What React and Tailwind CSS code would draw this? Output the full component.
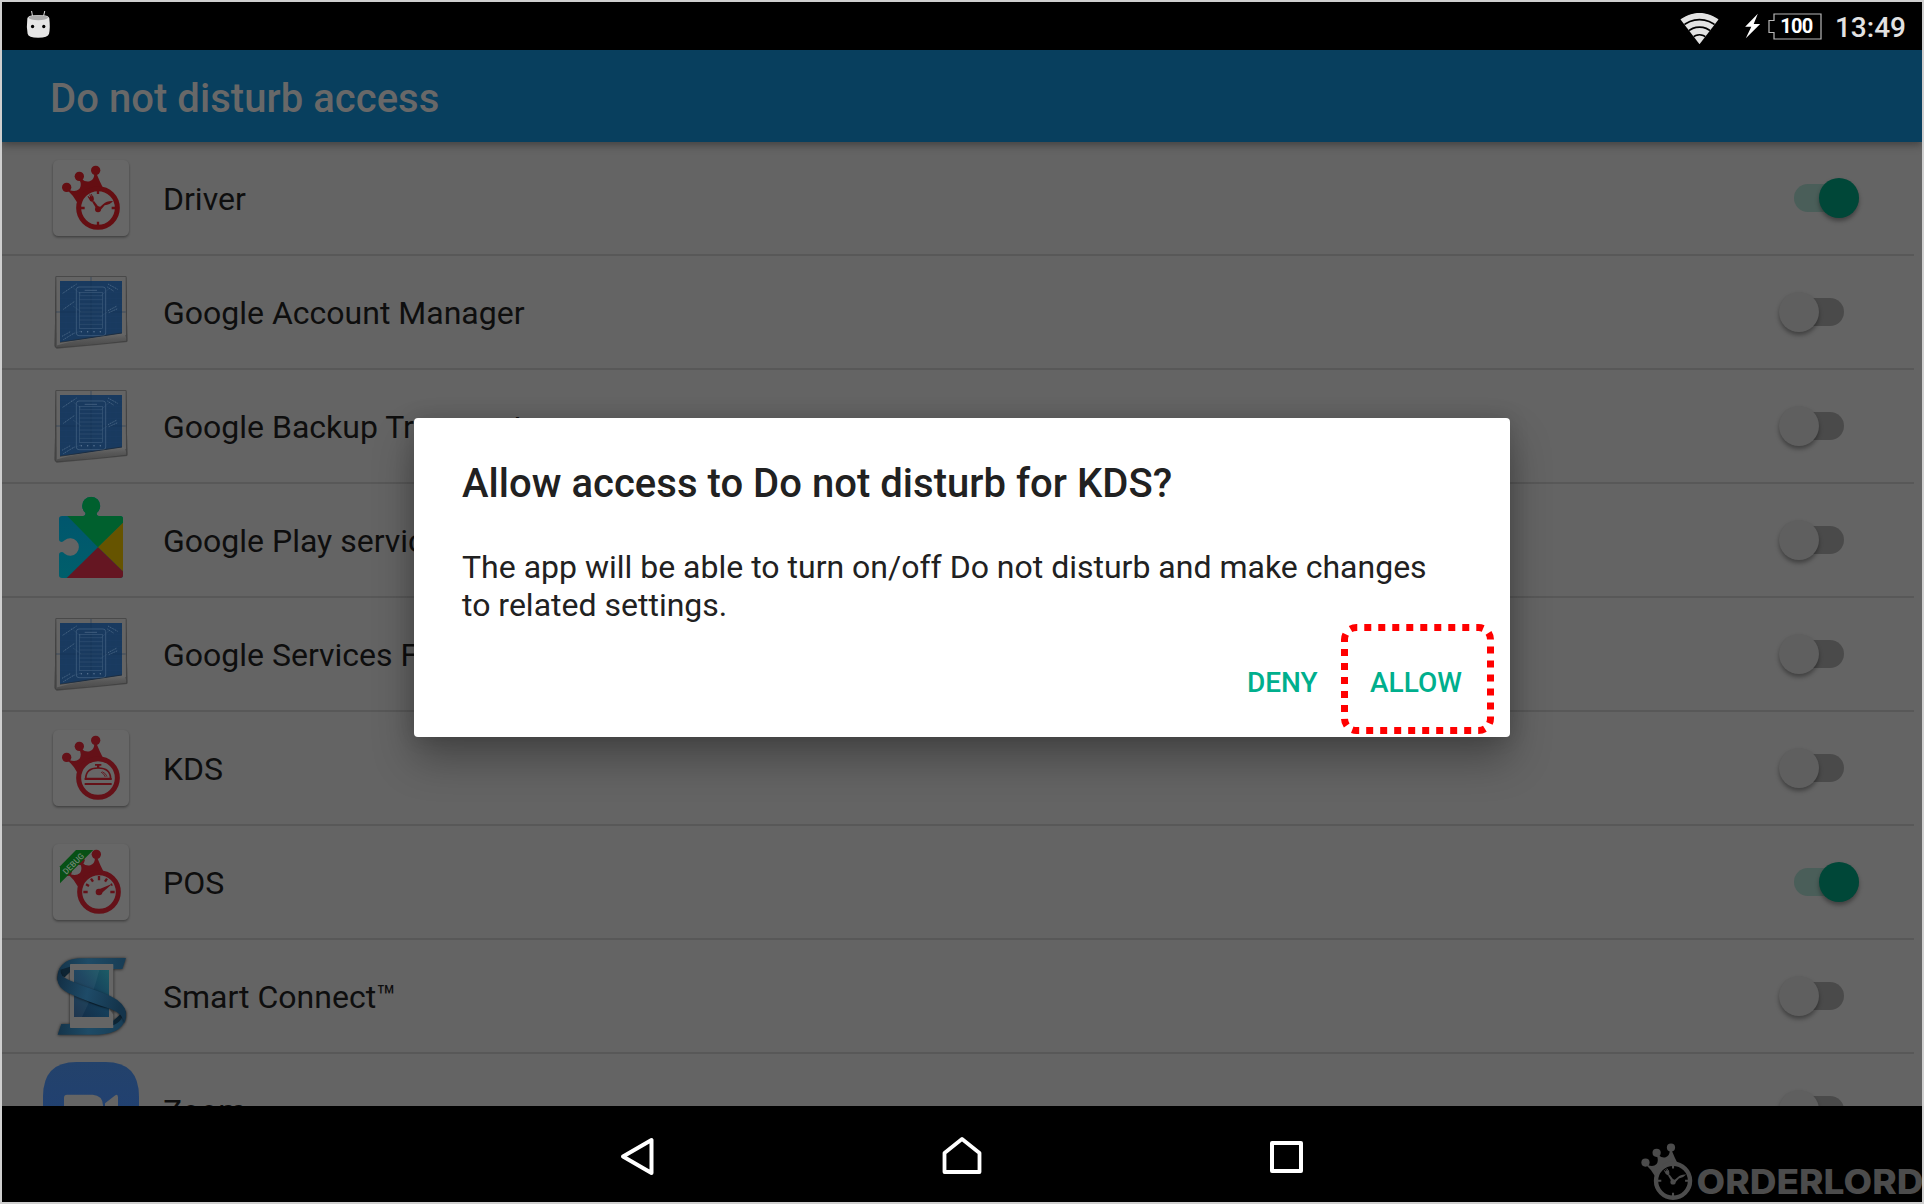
import React from "react";

function IconFrame({ viewBox = "39 30 228 228", children }) {
  return (
    <svg viewBox={viewBox} className="h-[76px] w-[76px] shrink-0 overflow-visible">
      {children}
    </svg>
  );
}

function Tile() {
  return (
    <rect x="39" y="30" width="228" height="228" rx="16" fill="#676767"
      style={{ filter: "drop-shadow(0 4px 3px rgba(0,0,0,.38))" }} />
  );
}

function Crown() {
  return (
    <g>
      <circle cx="80" cy="112" r="14" />
      <circle cx="118" cy="79" r="14" />
      <circle cx="167" cy="61" r="14" />
      <path d="M88 120 Q106 128 118 117 Q126 106 119 90 L126 88 Q136 97 149 94 Q162 90 163 72 L170 72 Q178 92 188 112 L150 116 L122 138 L112 158 Q102 138 84 122 Z" />
    </g>
  );
}

function ClockMark() {
  return (
    <>
      <Crown />
      <circle cx="174" cy="174" r="58" fill="none" stroke="currentColor" strokeWidth="15" />
      <path d="M174 120v12M174 215v12M122 174h12M215 174h12" stroke="currentColor" strokeWidth="7" />
      <circle cx="174" cy="178" r="9" />
      <path d="M170 178 L157 156 L162 153 L178 174 Z" />
      <path d="M147 144 L144 138 M152 141 L149 134 M157 139 L153 132" fill="none" stroke="currentColor" strokeWidth="3" />
      <path d="M145 143 Q149 154 157 156 Q165 151 159 137 L156 138 Z" />
      <path d="M174 176 L190 162 Q200 152 219 153 Q210 164 194 166 L180 182 Z" />
    </>
  );
}

function DriverIcon() {
  return (
    <IconFrame>
      <Tile />
      <g fill="currentColor" className="text-[#650e12]"><ClockMark /></g>
    </IconFrame>
  );
}

function KdsIcon() {
  return (
    <IconFrame>
      <Tile />
      <g fill="currentColor" className="text-[#651118]">
        <Crown />
        <circle cx="174" cy="174" r="58" fill="none" stroke="currentColor" strokeWidth="15" />
        <path d="M165 132h19v5h-6v7h-7v-7h-6z" />
        <path d="M137 176 Q138 144 174 144 Q211 144 212 176 Z" fill="none" stroke="currentColor" strokeWidth="5" />
        <path d="M187 155 Q198 160 201 170 M183 156 Q193 162 196 171" fill="none" stroke="currentColor" strokeWidth="2.5" />
        <path d="M134 174h81v6h-81zM134 189h81v6h-81z" />
      </g>
    </IconFrame>
  );
}

function PosIcon() {
  return (
    <IconFrame>
      <Tile />
      <g fill="currentColor" className="text-[#651118]" transform="translate(2 0)">
        <Crown />
        <circle cx="175" cy="174" r="58" fill="none" stroke="currentColor" strokeWidth="15" />
        <path d="M128 174h13M209 174h13M136 151l9 5M151 134l6 9M175 126v13M199 134l-6 9M215 151l-4 2" stroke="currentColor" strokeWidth="7" />
        <circle cx="175" cy="174" r="10" />
        <path d="M170 168 L215 149 L180 180 Z" />
      </g>
      <path d="M108 48 H160 L60 148 V97 Z" fill="#075015" />
      <text x="0" y="0" transform="translate(79 123) rotate(-45)" fill="#6d8471" fontSize="25" textLength="78" lengthAdjust="spacingAndGlyphs" className="font-['Roboto'] font-medium">DEBUG</text>
    </IconFrame>
  );
}

function BlueprintIcon() {
  return (
    <IconFrame viewBox="39 372 228 228">
      <defs>
        <linearGradient id="curl" x1="0" y1="0" x2="0.12" y2="1">
          <stop offset="0" stopColor="#6e6e6e" />
          <stop offset="0.5" stopColor="#585858" />
          <stop offset="1" stopColor="#4a4a4a" />
        </linearGradient>
      </defs>
      <path d="M47 379 L259 379 L262 573 Q160 584 50 593 L44 588 Z" fill="#444" style={{ filter: "drop-shadow(0 2px 2px rgba(0,0,0,.45))" }} />
      <path d="M49 381 H257 L258 556 L50 588 Z" fill="#646464" />
      <path d="M60 393 H246 V551 Q160 564 60 577 Z" fill="#193a5f" />
      <path d="M60 410H246M60 428H246M60 446H246M60 464H246M60 500H246M60 518H246M60 536H246M78 393V574M96 393V572M114 393V570M132 393V568M174 393V562M192 393V560M210 393V558M228 393V555" stroke="#1d4066" strokeWidth="1" />
      <path d="M48 486H257M153 381V564" stroke="#163350" strokeWidth="1.5" />
      <g fill="none" stroke="#456382" strokeWidth="1.6">
        <rect x="109" y="411" width="88" height="146" rx="8" strokeWidth="2.2" />
        <rect x="118" y="428" width="70" height="108" />
        <path d="M134 421h37" strokeWidth="2.6" />
        <path d="M118 437h70M118 449h70M118 462h70M118 474h70M118 486h70M118 498h70M118 510h70M118 523h70" strokeWidth="1.2" />
        <path d="M94 409L124 434M207 416L182 438M99 468L123 485M205 484L180 501M98 552L123 543" strokeDasharray="3 2" strokeWidth="1.3" />
        <path d="M68 430L110 402M204 402L233 418M202 411L222 424M70 478L104 454M204 482L231 468M206 488L233 476M66 559L91 545M70 569L103 549" strokeDasharray="4 2" strokeWidth="3" />
      </g>
      <g fill="#5d7896">
        <circle cx="124" cy="545" r="2.2" /><circle cx="143" cy="545" r="2.2" /><circle cx="162" cy="545" r="2.2" /><circle cx="181" cy="545" r="2.2" />
      </g>
      <path d="M48 587 Q100 571 251 550 Q260 558 258 572 Q160 584 48 592 Z" fill="url(#curl)" />
      <path d="M60 577 Q130 566 246 549" stroke="#222" strokeWidth="2.5" opacity=".6" fill="none" />
    </IconFrame>
  );
}

function PlayServicesIcon() {
  return (
    <IconFrame viewBox="39 66 228 228">
      <defs>
        <clipPath id="puzzle">
          <path d="M66 108 H130 Q138 107 136 98 A27 27 0 1 1 171 98 Q168 107 176 108 H241 Q249 108 249 116 V286 Q249 294 241 294 H66 Q57 294 57 286 V224 Q57 216 66 216 Q70 217 74 221 A26 26 0 1 0 74 181 Q70 185 66 186 Q57 186 57 178 V116 Q57 108 66 108 Z" />
        </clipPath>
        <linearGradient id="teal" x1="0" y1="0" x2="0" y2="1">
          <stop offset="0" stopColor="#00536e" /><stop offset="1" stopColor="#005f6b" />
        </linearGradient>
      </defs>
      <g clipPath="url(#puzzle)">
        <rect x="50" y="40" width="205" height="260" fill="url(#teal)" />
        <path d="M82 108 V40 H255 V122 L174 202 Z" fill="#00602e" />
        <path d="M255 122 V280 L174 202 Z" fill="#665400" />
        <path d="M174 202 L255 280 V300 H74 Z" fill="#651622" />
      </g>
    </IconFrame>
  );
}

function SmartConnectIcon() {
  return (
    <IconFrame viewBox="39 54 228 228">
      <defs>
        <linearGradient id="screen" x1="0" y1="1" x2="1" y2="0">
          <stop offset="0" stopColor="#132b45" /><stop offset="0.55" stopColor="#153f5b" /><stop offset="1" stopColor="#1c5c66" />
        </linearGradient>
        <linearGradient id="ribbon" x1="0" y1="0" x2="1" y2="0.2">
          <stop offset="0" stopColor="#122d42" /><stop offset="0.5" stopColor="#1e4b68" /><stop offset="1" stopColor="#14344b" />
        </linearGradient>
        <linearGradient id="band" x1="0" y1="0" x2="1" y2="0">
          <stop offset="0" stopColor="#14344a" /><stop offset="0.45" stopColor="#1e4b66" /><stop offset="1" stopColor="#183c54" />
        </linearGradient>
      </defs>
      <g style={{ filter: "drop-shadow(0 1px 4px rgba(0,0,0,.7))" }}>
        <path d="M258 54 L247 87 H122 Q80 88 65 113 L53 122 Q50 92 66 75 Q82 57 116 55 Z" fill="url(#band)" />
        <path d="M64 252 H160 Q234 250 244 216 L257 212 Q260 250 235 268 Q214 283 176 284 H53 Z" fill="url(#band)" />
        <rect x="90" y="72" width="130" height="192" rx="2" fill="#656565" />
      </g>
      <path d="M61 89 Q58 104 74 112 L90 96 V80 Z" fill="#0e2433" />
      <path d="M247 218 Q251 242 220 256 V242 Z" fill="#0e2433" />
      <rect x="102" y="90" width="105" height="141" fill="url(#screen)" />
      <path d="M102 90 H178 Q160 165 126 231 H102 Z" fill="#fff" opacity=".05" />
      <path d="M90 150 Q150 200 207 205 L220 224 V178 L90 130 Z" fill="#000" opacity=".25" />
      <path d="M62 88 Q58 106 82 118 Q110 132 187 158 Q240 176 255 206 Q262 228 253 250 Q250 222 212 207 Q130 180 83 158 Q48 139 53 111 Q54 97 62 88 Z" fill="url(#ribbon)" style={{ filter: "drop-shadow(0 2px 3px rgba(0,0,0,.55))" }} />
    </IconFrame>
  );
}

function ZoomIcon() {
  return (
    <IconFrame viewBox="39 396 228 228">
      <defs>
        <linearGradient id="zoomBlue" x1="0" y1="0" x2="0" y2="1">
          <stop offset="0" stopColor="#23426b" /><stop offset="1" stopColor="#1f3f76" />
        </linearGradient>
      </defs>
      <path d="M9 470 Q9 366 109 366 H197 Q297 366 297 470 V654 H9 Z" fill="url(#zoomBlue)" />
      <path d="M72 473 Q72 464 81 464 H158 Q188 466 189 496 V560 H72 Z M195 490 L224 467 Q234 460 234 472 V560 H195 Z" fill="#656565" />
    </IconFrame>
  );
}

function Toggle({ on }) {
  return on ? (
    <div className="mr-[55px] flex h-[28px] w-[65px] items-center justify-end rounded-full bg-[#4a5e59]">
      <div className="h-10 w-10 shrink-0 rounded-full bg-[#004738] shadow-[0_3px_4px_rgba(0,0,0,0.35)]" />
    </div>
  ) : (
    <div className="mr-[70px] flex h-[28px] w-[65px] items-center rounded-full bg-[linear-gradient(to_right,transparent_20px,#4a4a4a_20px)]">
      <div className="h-10 w-10 shrink-0 rounded-full bg-[#5f5f5f] shadow-[0_3px_4px_rgba(0,0,0,0.35)]" />
    </div>
  );
}

const apps = [
  { name: "Driver", Icon: DriverIcon, on: true },
  { name: "Google Account Manager", Icon: BlueprintIcon },
  { name: "Google Backup Transport", Icon: BlueprintIcon },
  { name: "Google Play services", Icon: PlayServicesIcon },
  { name: "Google Services Framework", Icon: BlueprintIcon },
  { name: "KDS", Icon: KdsIcon },
  { name: "POS", Icon: PosIcon, on: true },
  { name: "Smart Connect™", Icon: SmartConnectIcon },
  { name: "Zoom", Icon: ZoomIcon },
];

function AppRow({ name, Icon, on }) {
  return (
    <li className="mr-2 flex h-[114px] shrink-0 items-center border-b-2 border-[#585858] pl-[51px]">
      <Icon />
      <span className="ml-[34px] grow pt-[2px] text-[32px] leading-[38px] text-[#0e0e0e]">{name}</span>
      <Toggle on={on} />
    </li>
  );
}

function StatusBar() {
  return (
    <header className="flex h-12 shrink-0 items-center bg-black">
      <svg viewBox="78 28 74 88" className="-mt-[3px] ml-6 h-[29px] w-[25px]">
        <path d="M94 31 L97 48 M134 31 L130 48" stroke="#e4e4e4" strokeWidth="3" />
        <path d="M81 56 Q80 48 94 45 Q114 41 136 45 Q149 48 148 56 Q151 82 147 100 Q144 112 114 112 Q84 112 82 100 Q78 80 81 56Z" fill="#e6e6e6" />
        <path d="M84 51 Q92 44 114 44 Q138 44 145 51 Q138 59 114 59 Q90 59 84 51Z" fill="#aaa" />
        <circle cx="97" cy="78" r="5" fill="#000" /><circle cx="131" cy="78" r="5" fill="#000" />
      </svg>
      <svg viewBox="118 35 118 98" className="ml-auto mt-1 h-[33px] w-[39px]">
        <defs><clipPath id="fan"><path d="M177 132 L119 56 Q177 16 235 56 Z" /></clipPath></defs>
        <g clipPath="url(#fan)">
          <circle cx="177" cy="133" r="97" fill="#e2e2e2" />
          <g fill="none" stroke="#000" strokeWidth="5">
            <circle cx="177" cy="133" r="76" /><circle cx="177" cy="133" r="53" /><circle cx="177" cy="133" r="30" />
          </g>
        </g>
      </svg>
      <svg viewBox="314 38 47 76" className="ml-[25px] h-[26px] w-[17px]">
        <path d="M353 40 L316 78 H334 L318 112 L360 70 H341 Z" fill="#fff" />
      </svg>
      <svg viewBox="0 0 54 27" className="ml-[7px] h-[27px] w-[54px] shrink-0">
        <path d="M6 1 H53 V26 H6 V19.5 H1 V7.5 H6 Z" fill="none" stroke="#b8b8b8" strokeWidth="1.2" />
        <text x="12.3" y="20.3" fill="#fff" fontSize="20" textLength="33" className="font-['Roboto'] font-bold">100</text>
      </svg>
      <span className="ml-[13px] mr-[16px] mt-[3px] text-[28px] font-medium leading-[32px] text-[#e2e2e2]">13:49</span>
    </header>
  );
}

function Dialog() {
  return (
    <div className="flex h-[319px] w-[1096px] flex-col rounded-[4px] bg-white pl-12 pt-[42px] text-[#212121] shadow-[0_22px_42px_rgba(0,0,0,0.30),0_0_20px_rgba(0,0,0,0.14)]">
      <h2 className="text-[40px] font-medium leading-[48px] tracking-[0.03px]">Allow access to Do not disturb for KDS?</h2>
      <p className="mt-10 w-[1000px] text-[32px] leading-[38px]">The app will be able to turn on/off Do not disturb and make changes to related settings.</p>
      <div className="flex text-[28px] font-medium leading-[32px] text-[#00af8d]">
        <button className="ml-[785px] mt-[43px] w-[72px] self-start whitespace-nowrap text-left">DENY</button>
        <div className="relative ml-[51px] mt-[43px]">
          <button className="whitespace-nowrap">ALLOW</button>
          <svg viewBox="1341 624 153 110" className="pointer-events-none absolute -left-[29px] -top-[43px] h-[110px] w-[153px] max-w-none">
            <path d="M1344.5 641 V639.5 A12 12 0 0 1 1356.5 627.5 H1478.5 A12 12 0 0 1 1490.5 639.5 V718.5 A12 12 0 0 1 1478.5 730.5 H1356.5 A12 12 0 0 1 1344.5 718.5 Z" fill="none" stroke="#f00" strokeWidth="7" strokeDasharray="7 7" />
          </svg>
        </div>
      </div>
    </div>
  );
}

function NavBar() {
  return (
    <nav className="relative flex h-24 shrink-0 items-center bg-black pt-1 text-white">
      <svg viewBox="0 0 40 44" className="ml-[615px] h-11 w-10" fill="none" stroke="currentColor" strokeWidth="4" strokeLinejoin="round">
        <path d="M34.5 6 V39 L6 22.5 Z" />
      </svg>
      <svg viewBox="0 0 44 44" className="ml-[283px] h-11 w-11" fill="none" stroke="currentColor" strokeWidth="3.8" strokeLinejoin="round">
        <path d="M4.5 38 V19 L22 5 L39.5 19 V38 Z" />
      </svg>
      <svg viewBox="0 0 40 44" className="ml-[283px] h-11 w-10" fill="none" stroke="currentColor" strokeWidth="4" strokeLinejoin="round">
        <path d="M5 9 H34 V37 H5 Z" />
      </svg>
      <div className="absolute bottom-0 right-0 flex h-[64px] w-[289px] text-[#4c4c4c]">
        <svg viewBox="0 0 289 64" className="h-[64px] w-[289px] overflow-visible" fill="currentColor">
          <g transform="translate(-11 -8.3) scale(.2933)"><ClockMark /></g>
          <text x="63.5" y="56" fontSize="34" textLength="227" lengthAdjust="spacingAndGlyphs" className="font-['Inter'] font-extrabold">ORDERLORD</text>
        </svg>
      </div>
    </nav>
  );
}

export default function App() {
  return (
    <div className="flex h-[1204px] w-[1924px] flex-col overflow-hidden border-2 border-[#cfcfcf] bg-[#646464] font-['Roboto',sans-serif]">
      <StatusBar />
      <main className="relative flex h-[1056px] shrink-0 flex-col">
        <div className="z-10 flex h-[92px] shrink-0 items-center bg-[#083f5e] pl-12 pt-1.5 shadow-[0_3px_8px_rgba(0,0,0,0.35)]">
          <h1 className="text-[40px] font-medium leading-[48px] tracking-[0.05px] text-[#686868]">Do not disturb access</h1>
        </div>
        <ul className="flex grow flex-col overflow-hidden">
          {apps.map((a) => <AppRow key={a.name} {...a} />)}
        </ul>
        <div className="absolute inset-0 z-20 flex items-center justify-center pb-[2px]">
          <Dialog />
        </div>
      </main>
      <NavBar />
    </div>
  );
}
